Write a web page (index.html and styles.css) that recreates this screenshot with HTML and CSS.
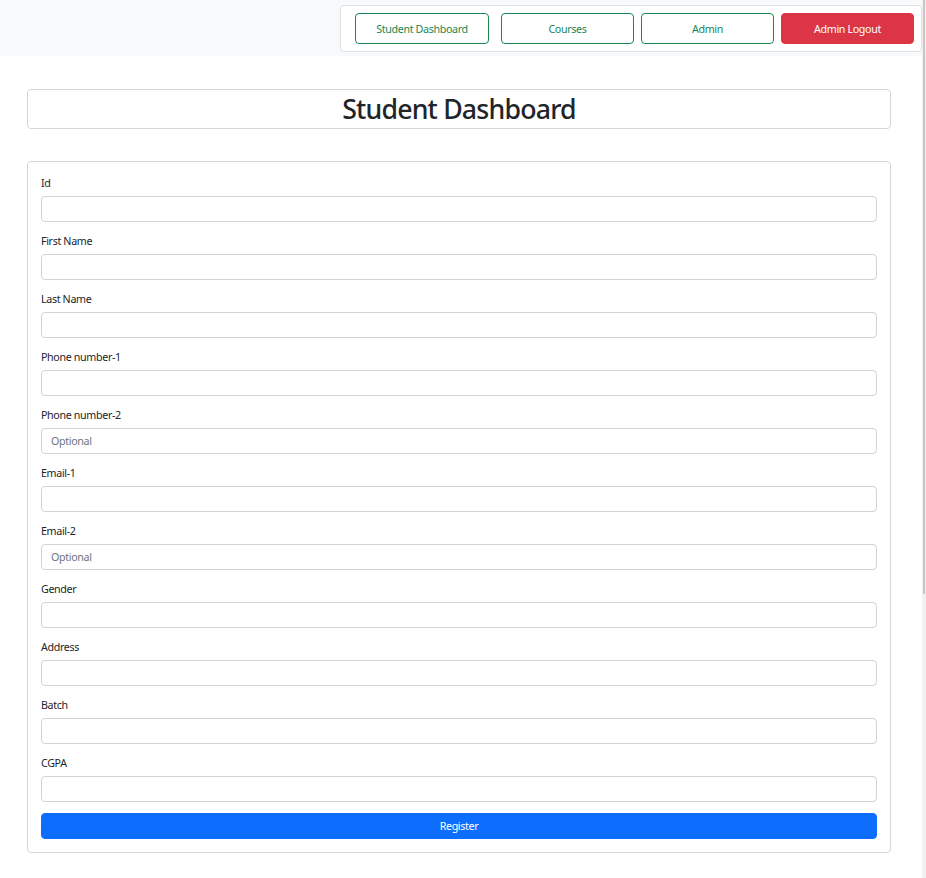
FILE: index.html
```html
<!DOCTYPE html>
<html>
<head>
<meta charset="utf-8">
<title>Student Dashboard</title>
<link rel="stylesheet" href="styles.css">
</head>
<body>
<div class="page">
  <header class="topbar">
    <nav class="navbox">
      <a class="btn btn-outline" href="#">Student Dashboard</a>
      <a class="btn btn-outline" href="#">Courses</a>
      <a class="btn btn-outline" href="#">Admin</a>
      <a class="btn btn-danger" href="#">Admin Logout</a>
    </nav>
  </header>
  <main class="main">
    <div class="title-box"><h1 class="title">Student Dashboard</h1></div>
    <form class="card">
      <div class="field"><label class="label">Id</label><input class="input" type="text"></div>
      <div class="field"><label class="label">First Name</label><input class="input" type="text"></div>
      <div class="field"><label class="label">Last Name</label><input class="input" type="text"></div>
      <div class="field"><label class="label">Phone number-1</label><input class="input" type="text"></div>
      <div class="field"><label class="label">Phone number-2</label><input class="input" type="text" placeholder="Optional"></div>
      <div class="field"><label class="label">Email-1</label><input class="input" type="text"></div>
      <div class="field"><label class="label">Email-2</label><input class="input" type="text" placeholder="Optional"></div>
      <div class="field"><label class="label">Gender</label><input class="input" type="text"></div>
      <div class="field"><label class="label">Address</label><input class="input" type="text"></div>
      <div class="field"><label class="label">Batch</label><input class="input" type="text"></div>
      <div class="field"><label class="label">CGPA</label><input class="input" type="text"></div>
      <button class="submit" type="button">Register</button>
    </form>
  </main>
</div>
<div class="scrollbar"><div class="thumb"></div></div>
</body>
</html>
```

FILE: styles.css
```css
html {
  background: #fff;
}
body {
  margin: 0;
  font-family: "Noto Sans", "Open Sans", sans-serif;
  font-size: 10.7px;
  letter-spacing: -0.35px;
  color: #212529;
  display: grid;
  grid-template-columns: 1fr 4px;
  min-height: 878px;
  overflow: hidden;
}
.page {
  min-width: 0;
}
.scrollbar {
  height: 878px;
  background: #f1f1f1;
  display: flex;
  justify-content: flex-end;
}
.thumb {
  width: 2px;
  margin-right: 1px;
  height: 594px;
  background: #c6c6c6;
}
.topbar {
  background: #f8f9fa;
  height: 56px;
  box-sizing: border-box;
  padding-top: 5px;
  display: flex;
  justify-content: flex-end;
}
.navbox {
  width: 582px;
  height: 47px;
  box-sizing: border-box;
  background: #fff;
  border: 1px solid #dee2e6;
  border-radius: 4px;
  padding: 7px 0 0 14px;
  display: flex;
  align-items: flex-start;
}
.btn {
  box-sizing: border-box;
  height: 31px;
  width: 133px;
  border-radius: 4px;
  display: flex;
  align-items: center;
  justify-content: center;
  text-decoration: none;
  font-size: 10.7px;
}
.btn-outline {
  border: 1px solid #198754;
  color: #198754;
  margin-right: 7px;
}
.btn-outline:first-child {
  width: 134px;
  margin-right: 12px;
}
.btn-danger {
  background: #dc3545;
  border: 1px solid #dc3545;
  color: #fff;
}
.main {
  padding: 33px 31px 0 27px;
}
.title-box {
  border: 1px solid #d3d6d9;
  border-radius: 4px;
  height: 40px;
  box-sizing: border-box;
  display: flex;
  align-items: center;
  justify-content: center;
}
.title {
  margin: 0;
  font-size: 26.7px;
  font-weight: 500;
  letter-spacing: -0.8px;
  line-height: 1.2;
}
.card {
  margin-top: 32px;
  border: 1px solid #d3d6d9;
  border-radius: 4px;
  padding: 14px 13px 13px 13px;
  display: flex;
  flex-direction: column;
  gap: 12px;
}
.field {
  display: flex;
  flex-direction: column;
}
.label {
  height: 16px;
  line-height: 15px;
  margin-bottom: 4px;
}
.input {
  box-sizing: border-box;
  height: 26px;
  width: 100%;
  margin: 0;
  border: 1px solid #ced4da;
  border-radius: 4px;
  padding: 0 9px;
  font-family: inherit;
  font-size: 10.7px;
  letter-spacing: -0.35px;
  color: #212529;
  outline: none;
}
.input::placeholder {
  color: #6c757d;
}
.submit {
  height: 26px;
  margin: -1px 0 0;
  border: 1px solid #0d6efd;
  background: #0d6efd;
  color: #fff;
  border-radius: 4px;
  font-family: inherit;
  font-size: 10.7px;
  letter-spacing: -0.35px;
}
```
